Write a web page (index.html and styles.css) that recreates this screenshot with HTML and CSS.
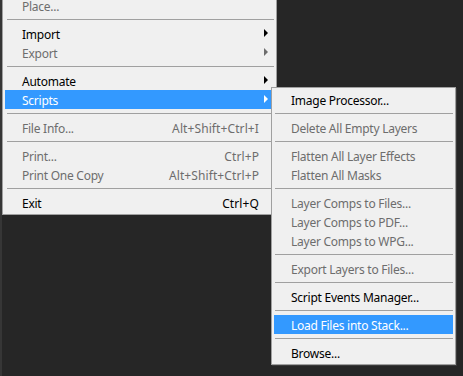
FILE: index.html
```html
<!DOCTYPE html>
<html>
<head>
<meta charset="utf-8">
<link rel="stylesheet" href="styles.css">
</head>
<body>
<div class="page">
  <div class="menu main">
    <div class="item disabled"><span class="label">Place...</span></div>
    <div class="sep"></div>
    <div class="item"><span class="label">Import</span><span class="arrow"><svg width="4" height="8" viewBox="0 0 4 8"><polygon points="0,0 4,4 0,8"/></svg></span></div>
    <div class="item disabled"><span class="label">Export</span><span class="arrow"><svg width="4" height="8" viewBox="0 0 4 8"><polygon points="0,0 4,4 0,8"/></svg></span></div>
    <div class="sep"></div>
    <div class="item"><span class="label">Automate</span><span class="arrow"><svg width="4" height="8" viewBox="0 0 4 8"><polygon points="0,0 4,4 0,8"/></svg></span></div>
    <div class="item active"><span class="label">Scripts</span><span class="arrow"><svg width="4" height="8" viewBox="0 0 4 8"><polygon points="0,0 4,4 0,8"/></svg></span></div>
    <div class="sep"></div>
    <div class="item disabled"><span class="label">File Info...</span><span class="key">Alt+Shift+Ctrl+I</span><span class="arrow"></span></div>
    <div class="sep"></div>
    <div class="item disabled"><span class="label">Print...</span><span class="key">Ctrl+P</span><span class="arrow"></span></div>
    <div class="item disabled"><span class="label">Print One Copy</span><span class="key">Alt+Shift+Ctrl+P</span><span class="arrow"></span></div>
    <div class="sep"></div>
    <div class="item"><span class="label">Exit</span><span class="key">Ctrl+Q</span><span class="arrow"></span></div>
  </div>

  <div class="menu sub">
    <div class="item"><span class="label">Image Processor...</span></div>
    <div class="sep"></div>
    <div class="item disabled"><span class="label">Delete All Empty Layers</span></div>
    <div class="sep"></div>
    <div class="item disabled"><span class="label">Flatten All Layer Effects</span></div>
    <div class="item disabled"><span class="label">Flatten All Masks</span></div>
    <div class="sep"></div>
    <div class="item disabled"><span class="label">Layer Comps to Files...</span></div>
    <div class="item disabled"><span class="label">Layer Comps to PDF...</span></div>
    <div class="item disabled"><span class="label">Layer Comps to WPG...</span></div>
    <div class="sep"></div>
    <div class="item disabled"><span class="label">Export Layers to Files...</span></div>
    <div class="sep"></div>
    <div class="item"><span class="label">Script Events Manager...</span></div>
    <div class="sep"></div>
    <div class="item active"><span class="label">Load Files into Stack...</span></div>
    <div class="sep"></div>
    <div class="item"><span class="label">Browse...</span></div>
  </div>
</div>
</body>
</html>
```

FILE: styles.css
```css
html, body {
  margin: 0;
  padding: 0;
  background: #262626;
}

.page {
  position: relative;
  width: 463px;
  height: 376px;
  overflow: hidden;
  box-sizing: border-box;
  border-left: 2px solid #363636;
  font-family: "Noto Sans", "Open Sans", sans-serif;
  font-size: 12px;
}

.menu {
  background: #f0f0f0;
  border: 1px solid #a0a0a0;
  padding: 2px;
  box-sizing: border-box;
}

.main {
  width: 275px;
  margin-top: -7px;
}

.sub {
  position: absolute;
  left: 269px;
  top: 87px;
  width: 185px;
  box-shadow: 1px 1px 0 #3a3a3a;
}

.item {
  display: flex;
  align-items: center;
  box-sizing: border-box;
  height: 19px;
  padding: 2px 6px 0 17px;
  line-height: 17px;
  color: #000;
  white-space: nowrap;
}

.item .label {
  flex: 1;
  letter-spacing: -0.25px;
}

.item .key {
  margin-left: 10px;
  letter-spacing: 0.1px;
}

.item .arrow {
  width: 4px;
  height: 8px;
  margin-left: 5px;
  margin-top: -3px;
  display: flex;
}

.item .arrow svg {
  display: block;
  fill: currentColor;
}

.item.disabled {
  color: #6d6d6d;
}

.item.active {
  background: #3399ff;
  color: #fff;
}

.sep {
  height: 9px;
  box-sizing: border-box;
  padding-top: 4px;
  margin: 0 0 0 2px;
}

.sep::before {
  content: "";
  display: block;
  height: 1px;
  background: #a0a0a0;
}

.sub .sep {
  margin: 0 0 0 1px;
}
```
